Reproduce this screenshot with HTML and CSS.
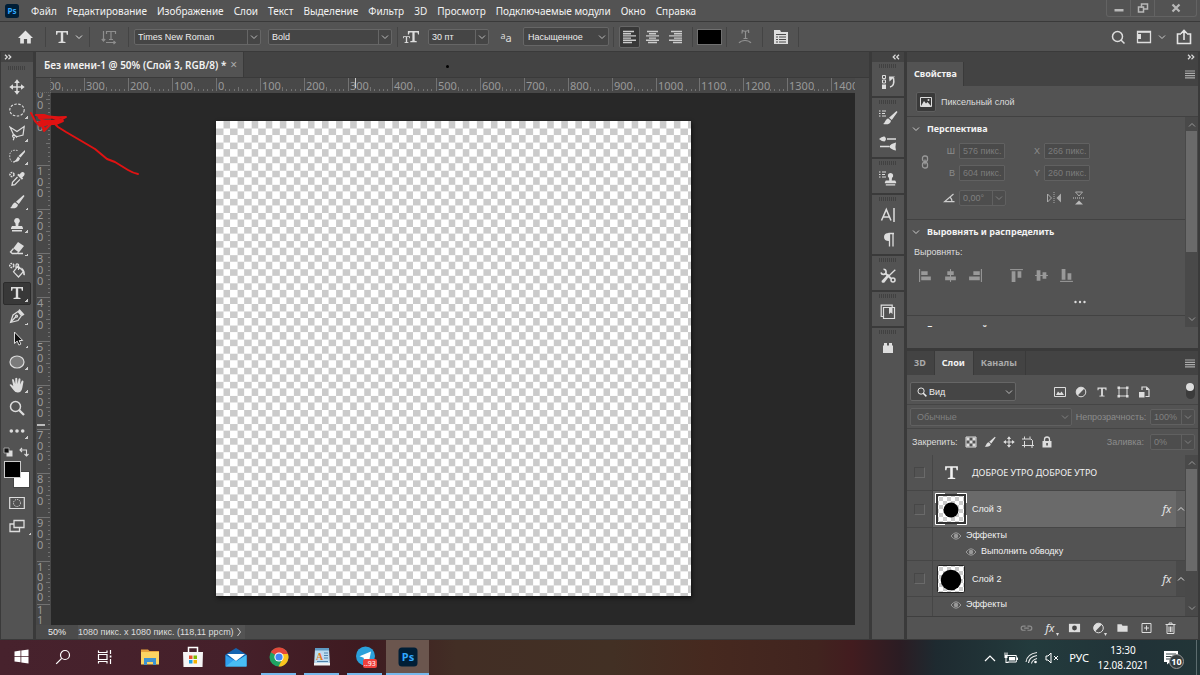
FILE: index.html
```html
<!DOCTYPE html>
<html lang="ru">
<head>
<meta charset="utf-8">
<title>Без имени-1</title>
<link rel="stylesheet" href="styles.css">
</head>
<body>
<svg class="defs" aria-hidden="true">
  <symbol id="chev" viewBox="0 0 8 8"><path d="M1 2.500 4 5.500 7 2.500" fill="none" stroke="currentColor"/></symbol>
  <symbol id="chev-up" viewBox="0 0 8 8"><path d="M1 5.500 4 2.500 7 5.500" fill="none" stroke="currentColor"/></symbol>
  <symbol id="dbl-right" viewBox="0 0 8 6"><path d="M1 .8 3.300 3 1 5.200M4.500.8 6.800 3 4.500 5.200" fill="none" stroke="currentColor" stroke-width="1.200"/></symbol>
  <symbol id="dbl-left" viewBox="0 0 8 6"><path d="M3.500.8 1.200 3 3.500 5.200M7 .8 4.700 3 7 5.200" fill="none" stroke="currentColor" stroke-width="1.200"/></symbol>
  <symbol id="brush" viewBox="0 0 16 16"><path d="M14.500 1 15.500 2 9.800 10 7 7.700zM6.300 8.400 9 10.700C8.700 14 5 15 1 14 3.500 12.500 3 9 6.300 8.400z" fill="currentColor"/></symbol>
  <symbol id="move" viewBox="0 0 16 16"><path d="M8 2v12M2 8h12" stroke="currentColor" stroke-width="1.500"/><path d="M8 .3 10.800 4H5.200zM8 15.700 10.800 12H5.200zM.3 8 4 5.200v5.600zM15.700 8 12 5.200v5.600z" fill="currentColor"/></symbol>
  <symbol id="tee" viewBox="0 0 16 16"><path d="M2 2h12v3.800h-1.200L12.300 3.600H9.200v9l2.300.5V14h-7v-.9l2.300-.5v-9H3.700L3.200 5.800H2z" fill="currentColor"/></symbol>
  <symbol id="stamp" viewBox="0 0 16 16"><path d="M8 1a2.900 2.900 0 0 1 1.600 5.300L9.300 9H13l1 2v1H2v-1l1-2h3.700l-.3-2.700A2.900 2.900 0 0 1 8 1zM3 13h10v1.500H3z" fill="currentColor"/></symbol>
  <symbol id="eye" viewBox="0 0 12 10"><path d="M1 5Q6-1.500 11 5 6 11.500 1 5z" fill="none" stroke="currentColor"/><circle cx="6" cy="5" r="2.200" fill="currentColor"/></symbol>
  <symbol id="lens" viewBox="0 0 16 16"><circle cx="6.500" cy="6.500" r="5" fill="none" stroke="currentColor" stroke-width="1.500"/><path d="m10 10 5 5" stroke="currentColor" stroke-width="2.300"/></symbol>
  <symbol id="half" viewBox="0 0 12 12"><circle cx="6" cy="6" r="4.800" fill="none" stroke="currentColor"/><path d="M9.400 2.600A4.800 4.800 0 0 0 2.600 9.400z" fill="currentColor"/></symbol>
  <symbol id="lines" viewBox="0 0 10 9"><path d="M0 1h10M0 3.300h10M0 5.600h10M0 7.900h10" stroke="currentColor" stroke-width="1.200"/></symbol>
  <symbol id="list" viewBox="0 0 7 7"><path d="M0 1h1.500M3 1h4M0 3.500h1.500M3 3.500h3M0 6h1.500M3 6h4" stroke="currentColor"/></symbol>
</svg>

<header class="menubar">
  <svg class="ps" viewBox="0 0 14 14"><rect width="14" height="14" rx="2.500" fill="#001e36"/><text x="7" y="10" text-anchor="middle" class="ps-text" font-size="8">Ps</text></svg>
  <nav class="menus">
    <button>Файл</button><button>Редактирование</button><button>Изображение</button><button>Слои</button><button>Текст</button><button>Выделение</button><button>Фильтр</button><button>3D</button><button>Просмотр</button><button>Подключаемые модули</button><button>Окно</button><button>Справка</button>
  </nav>
  <div class="winctl">
    <button aria-label="Свернуть"><svg width="12" height="12" viewBox="0 0 12 12"><path d="M1.500 7h9v2.500h-9z" fill="#b8b8b8"/></svg></button>
    <button aria-label="Восстановить"><svg width="12" height="12" viewBox="0 0 12 12"><path d="M4.500 6V2h6v5h-4M1.500 5h5v5h-5z" fill="none" stroke="#b8b8b8" stroke-width="1.500"/></svg></button>
    <button aria-label="Закрыть" class="wide"><svg width="12" height="12" viewBox="0 0 12 12"><path d="m2.500 2.500 7 7m0-7-7 7" stroke="#b8b8b8" stroke-width="2.200"/></svg></button>
  </div>
</header>

<section class="options">
  <button class="w-home" aria-label="Домой"><svg width="17" height="16" viewBox="0 0 16 16"><path d="M8 1.500 15.500 9H13.300v5.500H9.600V10H6.400v4.500H2.700V9H.5z" fill="#e4e4e4"/></svg></button>
  <i class="sep"></i>
  <button class="w-tee" aria-label="Текст"><svg width="16" height="16"><use href="#tee"/></svg><svg width="8" height="8"><use href="#chev"/></svg></button>
  <i class="sep"></i>
  <button class="w-orient" aria-label="Ориентация"><svg width="16" height="16" viewBox="0 0 16 16" fill="none" stroke="#8e8e8e"><path d="M2.500 2v10M.8 10l1.700 2 1.700-2M5.500 5V2.500h9V5M10 2.500v8M8 10.500h4M5 13.500h9M12.500 12l1.800 1.500-1.800 1.500" stroke-width="1.200"/></svg></button>
  <i class="sep"></i>
  <label class="combo split w-font"><select aria-label="Шрифт"><option>Times New Roman</option></select><svg><use href="#chev"/></svg></label>
  <label class="combo split w-style"><select aria-label="Начертание"><option>Bold</option></select><svg><use href="#chev"/></svg></label>
  <i class="sep size-sep"></i>
  <svg class="lab" viewBox="0 0 16 14"><use href="#tee" x="-1" y="5" width="9" height="9"/><use href="#tee" x="3" y="-1" width="15" height="15"/></svg>
  <label class="combo split w-size"><select aria-label="Размер"><option>30 пт</option></select><svg><use href="#chev"/></svg></label>
  <span class="aa"><span>a</span>a</span>
  <label class="combo w-anti"><select aria-label="Сглаживание"><option>Насыщенное</option></select><svg><use href="#chev"/></svg></label>
  <i class="sep"></i>
  <div class="aligns">
    <button class="on" aria-label="Влево"><svg width="13" height="14" viewBox="0 0 13 14"><path d="M0 1.500h11M0 3.700h8M0 5.900h13M0 8.100h8M0 10.300h13M0 12.500h9" stroke="#ccc" stroke-width="1.400"/></svg></button>
    <button aria-label="По центру"><svg width="13" height="14" viewBox="0 0 13 14"><path d="M1 1.500h11M3 3.700h7M0 5.900h13M3 8.100h7M0 10.300h13M2 12.500h9" stroke="#ccc" stroke-width="1.400"/></svg></button>
    <button aria-label="Вправо"><svg width="13" height="14" viewBox="0 0 13 14"><path d="M2 1.500h11M5 3.700h8M0 5.900h13M5 8.100h8M0 10.300h13M4 12.500h9" stroke="#ccc" stroke-width="1.400"/></svg></button>
  </div>
  <i class="sep"></i>
  <button class="colour" aria-label="Цвет текста"></button>
  <i class="sep"></i>
  <button class="w-warp" aria-label="Деформация"><svg width="14" height="15" viewBox="0 0 14 15" fill="none" stroke="#929292" stroke-width="1.200"><path d="M4 4.500 4.300 1.500Q7 3 10.500 1.500l.2 2.500M7.500 2.500v7M5.500 9.500h4M1 14q2-2.500 6-2.500t6 2.500"/></svg></button>
  <i class="sep"></i>
  <button class="w-warp" aria-label="Панели"><svg width="16" height="16" viewBox="0 0 16 16"><path d="M1 1h6l1 2h7v12H1z" fill="#ddd"/><path d="M3 5.500h10M3 8h2M6 8h7M3 10.500h2M6 10.500h7M3 13h2M6 13h7" stroke="#4a4a4a"/></svg></button>
  <i class="sep"></i>
  <div class="opt-right">
    <button aria-label="Поиск"><svg width="16" height="16" viewBox="0 0 16 16" fill="none" stroke="#ddd" stroke-width="1.500"><circle cx="7.500" cy="7.500" r="5"/><path d="m11 11 3.500 3.500"/></svg></button>
    <button aria-label="Рабочая среда"><svg width="16" height="14" viewBox="0 0 16 14"><path d="M1.500 1.500h13v11h-13z" fill="none" stroke="#ddd" stroke-width="1.300"/><path d="M1 1h14v1.800H1zM2 4h3v5H2z" fill="#ddd"/></svg><svg class="ws-chev" width="8" height="8"><use href="#chev"/></svg></button>
    <button aria-label="Поделиться"><svg width="16" height="16" viewBox="0 0 16 16" fill="none" stroke="#e4e4e4" stroke-width="1.600"><path d="M5 5H1.500v9.500h13V5H11M8 11V2M5 4.500l3-3 3 3"/></svg></button>
  </div>
</section>

<main class="work">
  <aside class="tools">
    <div class="strip"><svg width="8" height="6"><use href="#dbl-right"/></svg></div>
    <div class="grip"></div>
    <div class="toolset">
      <button aria-label="Перемещение"><svg><use href="#move"/></svg></button>
      <button class="more" aria-label="Овальная область"><svg viewBox="0 0 16 16"><ellipse cx="8" cy="8" rx="7.200" ry="6" fill="none" stroke="currentColor" stroke-width="1.100" stroke-dasharray="2.500 1.500"/></svg></button>
      <button class="more" aria-label="Лассо"><svg viewBox="0 0 16 16" fill="none" stroke="currentColor" stroke-width="1.200"><path d="M5 10.500 1 2 8 6.500 15.200 1.500 14 10 8.500 11.500 4.500 10.500M5 9.500a1.500 1.500 0 1 0 .2 3l-1 2.700M5 9.500l3 3"/></svg></button>
      <button class="more" aria-label="Быстрое выделение"><svg viewBox="0 0 16 16"><path d="M8.500 2.500Q.7 1 .7 8t6 6" fill="none" stroke="currentColor" stroke-dasharray="1.500 1.200"/><path d="M16 2v2L11.500 9.500 9.500 8zM9 8.500l2 1.700Q10 14.500 4 14 7.500 12 9 8.500z" fill="currentColor"/></svg></button>
      <button aria-label="Пипетка"><svg viewBox="0 0 16 16"><path d="M15.200 1.800q-1.600-1.700-3.200 0L10.500 3.500l-1-.8-1.300 1.300 4.700 4.700L14.200 7.400l-1-1 1.800-1.700q1.100-1.600.2-2.900z" fill="currentColor"/><path d="m8.500 6-5 5.200-.5 3 2.800-.6 5.200-5.200" fill="none" stroke="currentColor" stroke-width="1.300"/><circle cx="3" cy="3.500" r="2" fill="none" stroke="currentColor" stroke-width="1.600" stroke-dasharray="1.600 .8"/></svg></button>
      <button class="more" aria-label="Кисть"><svg><use href="#brush"/></svg></button>
      <button class="more" aria-label="Штамп"><svg><use href="#stamp"/></svg></button>
      <button class="more" aria-label="Ластик"><svg viewBox="0 0 16 16"><path d="M9 2 15 6 9.800 12.500 4.300 8.300z" fill="currentColor"/><path d="M4.500 8.500 1.500 12l1.800 1.500h5l1.200-1.200M9 13.500h5" fill="none" stroke="currentColor" stroke-width="1.300"/></svg></button>
      <button aria-label="Заливка"><svg viewBox="0 0 16 16"><path d="m9 4 5.500 5.500-5 5.500L4.500 9.800zM9.500 8V2.500Q7.500 1 7 3v4" fill="none" stroke="currentColor" stroke-width="1.200"/><path d="M12 5.500q4 1.500 4 7.500-2 1-2-2.500z" fill="currentColor"/><circle cx="2.800" cy="3.500" r="2" fill="none" stroke="currentColor" stroke-width="1.600" stroke-dasharray="1.600 .8"/></svg></button>
      <button class="more active" aria-label="Текст"><svg><use href="#tee"/></svg></button>
      <button class="more" aria-label="Перо"><svg viewBox="0 0 16 16" fill="none" stroke="currentColor" stroke-width="1.200"><path d="M1.500 14.500 4 7l5-3.500 3.500 4L9 12.500zM1.500 14.500l5.500-6"/><circle cx="7.500" cy="8.200" r="1"/><path d="m10.500 1 5 5.500-2 1.500-4.700-4.700z" fill="currentColor" stroke="none"/></svg></button>
      <button class="more" aria-label="Выделение контура"><svg viewBox="0 0 16 16"><path d="M5.500 1v11.500l2.700-2.400 1.700 4 2-1-1.700-3.600h3.500z" fill="#111" stroke="#ddd"/></svg></button>
      <button class="more" aria-label="Эллипс"><svg viewBox="0 0 16 16"><ellipse cx="8" cy="8" rx="7" ry="6" fill="#7b7b7b" stroke="currentColor" stroke-width="1.200"/></svg></button>
      <button class="more" aria-label="Рука"><svg viewBox="0 0 16 16"><path d="M4.500 13 .6 8Q1 6.500 2.800 7.800l1.500 1.500L3 2.800q1-1.400 1.900.1L6.200 7 6.300 1.300q1-1.300 1.900 0L8.600 7l1-5.300q1.100-1.200 1.900.3L11.200 7.500l1.600-3.700q1.300-.7 1.700.8L13.300 11q-1 4.500-4.500 4.500-2.600 0-4.300-2.500z" fill="currentColor"/></svg></button>
      <button aria-label="Масштаб"><svg><use href="#lens"/></svg></button>
      <button class="more" aria-label="Ещё"><svg viewBox="0 0 16 16" fill="currentColor"><circle cx="2.300" cy="8" r="1.800"/><circle cx="8" cy="8" r="1.800"/><circle cx="13.700" cy="8" r="1.800"/></svg></button>
    </div>
    <div class="mini">
      <svg width="10" height="10" viewBox="0 0 10 10"><path d="M3.500 3.500h6v6h-6z" fill="#ddd"/><path d="M1 1h5v5H1z" fill="#111" stroke="#bbb" stroke-width=".8"/></svg>
      <svg width="10" height="10" viewBox="0 0 10 10" fill="none" stroke="#ddd" stroke-width="1.100"><path d="M1 3h6.500v6M3 1 1 3l2 2M5.500 7l2 2 2-2"/></svg>
    </div>
    <div class="swatches"><i></i><i></i></div>
    <div class="modes">
      <button aria-label="Быстрая маска"><svg viewBox="0 0 16 16"><path d="M.7 2.500h14.600v11H.7z" fill="none" stroke="currentColor" stroke-width="1.200"/><circle cx="8" cy="8" r="3.500" fill="none" stroke="currentColor" stroke-dasharray="1.300 1"/></svg></button>
      <button class="more" aria-label="Режим экрана"><svg viewBox="0 0 16 16" fill="none" stroke="currentColor" stroke-width="1.300"><path d="M5 2.500h10v7H5zM5 6H1v7.500h9.500v-4"/></svg></button>
    </div>
  </aside>

  <section class="doc">
    <div class="doctabs"><div class="doctab"><span>Без имени-1 @ 50% (Слой 3, RGB/8) *</span><button aria-label="Закрыть вкладку">×</button></div><i class="speck"></i></div>
    <div class="view">
      <i class="corner"></i>
      <svg class="ruler" id="rh"></svg>
      <i class="vs"></i>
      <svg class="ruler" id="rv"></svg>
      <div class="canvas">
        <svg class="art" viewBox="0 0 1080 1080" shape-rendering="crispEdges"><defs><pattern id="ck" width="32" height="32" patternUnits="userSpaceOnUse"><path d="M0 0h32v32H0z" fill="#fff"/><path d="M16 0h16v16H16zM0 16h16v16H0z" fill="#cbcbcb"/></pattern></defs><rect width="1080" height="1080" fill="url(#ck)"/></svg>
      </div>
      <i class="vs"></i>
    </div>
    <footer class="status"><span class="zoomv">50%</span><span class="info"><span class="clip">1080 пикс. x 1080 пикс. (118,11 ppcm)</span><svg width="6" height="10" viewBox="0 0 6 10"><path d="M1.500 1 4.500 5l-3 4" fill="none" stroke="#ccc"/></svg></span></footer>
    <svg class="scribble" viewBox="0 0 120 75" fill="none" stroke="#e01212" stroke-linecap="round" stroke-linejoin="round"><path stroke-width="2" d="M108 64Q103 63 98 60L85 52 77 49 65 39 48 29 36 22 28 17 24 13"/><path stroke-width="2" d="M1 3 5 11 10 16M6 5 33 8 8 6 12 11 32 10 9 12 24 14 36 7 9 8 18 14 30 12 10 14 15 19 24 12 12 16 14 21 18 17M6 5 14 5 33 11 26 14 12 10"/></svg>
  </section>

  <aside class="dock">
    <div class="strip"><svg width="8" height="6"><use href="#dbl-left"/></svg></div>
    <div class="group"><button aria-label="История"><svg viewBox="0 0 16 16"><path d="M2.500 1.500h3v3h-3zM2.500 6h3v3h-3z" fill="none" stroke="currentColor"/><path d="M2 10.500h4V15H2z" fill="currentColor"/><path d="M10 13q5-1 3.500-9" fill="none" stroke="currentColor" stroke-width="1.500"/><path d="M9 2.500h6L9.500 7.500z" fill="currentColor"/></svg></button></div>
    <div class="group"><button aria-label="Наборы кистей"><svg viewBox="0 0 20 16"><use href="#list" x="1" y="0" width="7" height="7"/><use href="#brush" x="4" y="0" width="16" height="16"/></svg></button><button aria-label="Параметры кисти"><svg viewBox="0 0 18 16"><path d="M8 4h9M1 11.500h9" stroke="currentColor" stroke-width="1.500"/><path d="M0 4q3-3 5.500-2.500 3 2.500 0 5Q3 6.500 0 4zM10 11.500q2-3 7-4-1 4 0 8-5-1-7-4z" fill="currentColor"/></svg></button></div>
    <div class="group"><button aria-label="Источник клонов"><svg viewBox="0 0 20 16"><use href="#list" x="1" y="0" width="7" height="7"/><use href="#stamp" x="5" y="1" width="15" height="15"/></svg></button></div>
    <div class="group"><button aria-label="Символ"><svg viewBox="0 0 16 16" fill="none" stroke="currentColor" stroke-width="1.500"><path d="M1.500 13.500 6.300 2.500l4.700 11M3 10h6.500M14 1v14"/></svg></button><button aria-label="Абзац"><svg viewBox="0 0 16 16"><path d="M8.500 1.500H14M9.500 2v12.500M13 2v12.500" stroke="currentColor" stroke-width="1.300"/><path d="M10 1v8Q4 9.500 4 5t6-4z" fill="currentColor"/></svg></button></div>
    <div class="group"><button aria-label="Инструменты"><svg viewBox="0 0 16 16"><path d="M3.500 1.200A2.600 2.600 0 1 1 1 4.500" fill="none" stroke="currentColor" stroke-width="1.600"/><path d="m5 5 6 5.500" stroke="currentColor" stroke-width="2"/><path d="m15.300 1.700-6.300 6" stroke="currentColor" stroke-width="1.300"/><path d="M9.800 7.500 4.500 14.500q-3 1.200-3-1.500L8 6z" fill="currentColor"/><circle cx="13" cy="12" r="2" fill="none" stroke="currentColor" stroke-width="1.500"/></svg></button></div>
    <div class="group"><button aria-label="Библиотеки"><svg viewBox="0 0 16 16" fill="none" stroke="currentColor" stroke-width="1.200"><path d="M3.500 3.500h11v11h-11z"/><path d="M3 12.500H1.200V1.200h11V3"/><path d="M9 4h3.500v6l-1.700-1.500L9 10z" fill="currentColor" stroke="none"/></svg></button></div>
    <div class="group last"><button aria-label="Модули"><svg viewBox="0 0 16 16"><path d="M3 5.500h1V3h3v2.500h2V3h3v2.500h1V13H3z" fill="currentColor"/></svg></button></div>
  </aside>

  <aside class="panels">
    <div class="strip right"><svg width="8" height="6"><use href="#dbl-right"/></svg></div>
    <section class="panel props">
      <div class="tabs"><button class="tab on">Свойства</button><svg class="burger"><use href="#lines"/></svg></div>
      <div class="kind"><span class="kindicon"><svg width="12" height="10" viewBox="0 0 12 10"><path d="M.5.5h11v9H.5z" fill="none" stroke="#ddd"/><path d="M1 9 4 4l2 2.500L7.500 5 11 9z" fill="#ddd"/><circle cx="8.500" cy="3" r="1" fill="#ddd"/></svg></span>Пиксельный слой</div>
      <div class="scrollbox">
        <div class="inner">
          <section class="sec persp">
            <h2><svg width="8" height="8"><use href="#chev"/></svg>Перспектива</h2>
            <div class="fields">
              <svg class="chain" width="8" height="14" viewBox="0 0 8 14" fill="none" stroke="#999" stroke-width="1.300"><rect x="1.500" y="1" width="5" height="5.500" rx="2"/><rect x="1.500" y="7.500" width="5" height="5.500" rx="2"/><path d="M4 4.500v5"/></svg>
              <label for="fw">Ш</label><input id="fw" value="576 пикс." disabled>
              <label for="fx">X</label><input id="fx" value="266 пикс." disabled>
              <label for="fh">В</label><input id="fh" value="604 пикс." disabled>
              <label for="fy">Y</label><input id="fy" value="260 пикс." disabled>
            </div>
            <div class="angle">
              <svg width="12" height="10" viewBox="0 0 12 10" fill="none" stroke="#ccc" stroke-width="1.200"><path d="M10.500 1 1.500 8.700h10M7 4q2 2 2 4.500"/></svg>
              <label class="combo split dis"><select disabled aria-label="Угол"><option>0,00°</option></select><svg><use href="#chev"/></svg></label>
              <button aria-label="Отразить по горизонтали"><svg width="16" height="12" viewBox="0 0 16 12"><path d="M8 0v12" stroke="#aaa" stroke-dasharray="1 1"/><path d="M1.500 2v8l4-4z" fill="none" stroke="#aaa"/><path d="M15 1.500v9L10.500 6z" fill="#aaa"/></svg></button>
              <button aria-label="Отразить по вертикали"><svg width="14" height="14" viewBox="0 0 14 14"><path d="M1 7h12" stroke="#ccc" stroke-dasharray="1 1"/><path d="M3.500 1h7L7 5z" fill="none" stroke="#aaa"/><path d="M3 13.500h8L7 9.500z" fill="#bbb"/></svg></button>
            </div>
          </section>
          <section class="sec align">
            <h2><svg width="8" height="8"><use href="#chev"/></svg>Выровнять и распределить</h2>
            <p>Выровнять:</p>
            <div class="alignrow">
              <button aria-label="Левые края"><svg viewBox="0 0 14 14"><path d="M1.500 1v12" stroke="#999"/><path d="M3 3h6v3.500H3zM3 8h9v3.500H3z" fill="#999"/></svg></button>
              <button aria-label="Центры по горизонтали"><svg viewBox="0 0 14 14"><path d="M7 1v12" stroke="#999"/><path d="M4 3h6v3.500H4zM2 8h10v3.500H2z" fill="#999"/></svg></button>
              <button aria-label="Правые края"><svg viewBox="0 0 14 14"><path d="M12.500 1v12" stroke="#999"/><path d="M5 3h6v3.500H5zM1 8h10v3.500H1z" fill="#999"/></svg></button>
              <button class="gap" aria-label="Верхние края"><svg viewBox="0 0 14 14"><path d="M1 1.500h12" stroke="#999"/><path d="M2.500 3H6v10H2.500zM8 3h3.500v6H8z" fill="#999"/></svg></button>
              <button aria-label="Центры по вертикали"><svg viewBox="0 0 14 14"><path d="M1 7h12" stroke="#999"/><path d="M2.500 2H6v10H2.500zM8 4h3.500v6H8z" fill="#999"/></svg></button>
              <button aria-label="Нижние края"><svg viewBox="0 0 14 14"><path d="M1 12.500h12" stroke="#999"/><path d="M2.500 1H6v10H2.500zM8 5h3.500v6H8z" fill="#999"/></svg></button>
            </div>
            <div class="dots"><svg width="12" height="4" viewBox="0 0 12 4" fill="#ddd"><circle cx="1.500" cy="2" r="1.200"/><circle cx="6" cy="2" r="1.200"/><circle cx="10.500" cy="2" r="1.200"/></svg></div>
          </section>
          <section class="sec next"><h2><svg width="8" height="8"><use href="#chev"/></svg>Быстрые действия</h2></section>
        </div>
        <div class="sb"><svg><use href="#chev-up"/></svg><i class="thumb t1"></i><svg><use href="#chev"/></svg></div>
      </div>
    </section>

    <section class="panel layers">
      <div class="tabs"><button class="tab">3D</button><button class="tab on">Слои</button><button class="tab">Каналы</button><svg class="burger"><use href="#lines"/></svg></div>
      <div class="lrow filter">
        <label class="combo search"><svg class="mag"><use href="#lens"/></svg><select aria-label="Фильтр слоёв"><option>Вид</option></select><svg><use href="#chev"/></svg></label>
        <div class="ficons">
          <svg viewBox="0 0 12 12"><path d="M.5 1.500h11v9H.5z" fill="none" stroke="#ddd"/><path d="M2 9l2-3.500 2 2 1.500-2L10 9z" fill="#ddd"/></svg>
          <svg viewBox="0 0 12 12"><use href="#half"/></svg>
          <svg><use href="#tee"/></svg>
          <svg viewBox="0 0 12 12"><path d="M2 2h8v8H2z" fill="none" stroke="#ddd"/><path d="M.5.5h2.500V3H.5zM9 .5h2.500V3H9zM.5 9h2.500v2.500H.5zM9 9h2.500v2.500H9z" fill="#ddd"/></svg>
          <svg viewBox="0 0 12 12"><path d="M4 4V1h4.500L11 3.500v7H7.500" fill="none" stroke="#ddd" stroke-width="1.200"/><path d="M1 6h5.500v5.500H1zM8 1v3h3z" fill="#ddd"/></svg>
        </div>
        <span class="toggle"></span>
      </div>
      <div class="lrow blend">
        <label class="combo dis w-blend"><select disabled aria-label="Режим наложения"><option>Обычные</option></select><svg><use href="#chev"/></svg></label>
        <span class="dim">Непрозрачность:</span>
        <label class="combo split dis w-pct"><select disabled aria-label="Непрозрачность"><option>100%</option></select><svg><use href="#chev"/></svg></label>
      </div>
      <div class="lrow locks">
        <span class="lk">Закрепить:</span>
        <svg viewBox="0 0 12 12"><path d="M1 1h10v10H1z" fill="none" stroke="#ddd"/><path d="M1.500 1.500h3v3h-3zM7.500 1.500h3v3h-3zM4.500 4.500h3v3h-3zM1.500 7.500h3v3h-3zM7.500 7.500h3v3h-3z" fill="#ddd"/></svg>
        <svg><use href="#brush"/></svg>
        <svg><use href="#move"/></svg>
        <svg viewBox="0 0 12 12" fill="none" stroke="#ddd"><path d="M2.500.5V3M0 3h9l1.500 1.500V9.500M2.500 5v6.500M0 9.500h12M8 .5v2M10 10v2"/></svg>
        <svg viewBox="0 0 12 12"><path d="M1.500 5h9v6.500h-9z" fill="#ddd"/><path d="M3.500 5V3.500a2.500 2.500 0 0 1 5 0V5" fill="none" stroke="#ddd" stroke-width="1.300"/><path d="M5.300 7h1.500v2.500H5.300z" fill="#444"/></svg>
        <span class="dim fill">Заливка:</span>
        <label class="combo split dis w-pct"><select disabled aria-label="Заливка"><option>0%</option></select><svg><use href="#chev"/></svg></label>
      </div>
      <div class="listbox">
        <div class="list">
          <div class="layer"><span class="vis"><input type="checkbox" aria-label="Видимость текстового слоя"></span><div class="body caps"><span class="thumbbox"><svg width="17" height="17"><use href="#tee"/></svg></span>ДОБРОЕ УТРО ДОБРОЕ УТРО</div></div>
          <div class="layer sel"><span class="vis"><input type="checkbox" aria-label="Видимость слоя 3"></span><div class="body"><span class="thumbbox"><svg class="th" width="32" height="32" viewBox="0 0 32 32"><path d="M1 1h30v30H1z" fill="#333"/><path d="M.5 10V.5H10M22 .5h9.500V10M.5 22v9.500H10M22 31.500h9.500V22" fill="none" stroke="#fff"/><rect x="3" y="3" width="26" height="26" fill="url(#mini)"/><circle cx="16" cy="17" r="7.500"/></svg></span>Слой 3</div><span class="fx">fx</span><span class="exp"><svg><use href="#chev-up"/></svg></span></div>
          <div class="effect e1"><span class="vis"></span><svg><use href="#eye"/></svg>Эффекты</div>
          <div class="effect e2"><span class="vis"></span><svg><use href="#eye"/></svg>Выполнить обводку</div>
          <div class="layer"><span class="vis"><input type="checkbox" aria-label="Видимость слоя 2"></span><div class="body"><span class="thumbbox"><svg class="th" width="32" height="32" viewBox="0 0 32 32"><defs><pattern id="mini" width="8" height="8" patternUnits="userSpaceOnUse"><path d="M0 0h8v8H0z" fill="#fff"/><path d="M0 0h4v4H0zM4 4h4v4H4z" fill="#ccc"/></pattern></defs><rect x="2.500" y="2.500" width="27" height="27" rx="1" fill="url(#mini)" stroke="#222"/><circle cx="16" cy="17" r="10.300"/></svg></span>Слой 2</div><span class="fx">fx</span><span class="exp"><svg><use href="#chev-up"/></svg></span></div>
          <div class="effect e1"><span class="vis"></span><svg><use href="#eye"/></svg>Эффекты</div>
          <div class="effect e2"><span class="vis"></span><svg><use href="#eye"/></svg>Выполнить обводку</div>
        </div>
        <div class="sb"><svg><use href="#chev-up"/></svg><i class="thumb t2"></i><svg><use href="#chev"/></svg></div>
      </div>
      <div class="lfoot">
        <button aria-label="Связать"><svg viewBox="0 0 14 12" fill="none" stroke="#8d8d8d" stroke-width="1.300"><path d="M6 4H3.500a2.200 2.200 0 0 0 0 4.400H6M8 4h2.500a2.200 2.200 0 0 1 0 4.400H8M4.500 6.200h5"/></svg></button>
        <button class="fx dd" aria-label="Стиль">fx</button>
        <button aria-label="Маска"><svg viewBox="0 0 14 12"><path d="M1 1.500h12v9H1z" fill="#ddd"/><circle cx="7" cy="6" r="2.600" fill="#444"/></svg></button>
        <button class="dd" aria-label="Корректирующий слой"><svg viewBox="0 0 12 12"><use href="#half"/></svg></button>
        <button aria-label="Группа"><svg viewBox="0 0 14 12"><path d="M1.500 2H6l1 1.500h5.500V10h-11z" fill="#ddd"/></svg></button>
        <button aria-label="Новый слой"><svg viewBox="0 0 12 12" fill="none" stroke="#ddd"><path d="M1.500 1.500h9v9h-9zM6 3.500v5M3.500 6h5"/></svg></button>
        <button aria-label="Удалить"><svg viewBox="0 0 12 12" fill="none" stroke="#ddd"><path d="M1 2.500h10M4.500 2.500v-1.500h3v1.500M2.500 3v8.500h7V3M4.500 4.500v5.500M6 4.500v5.500M7.500 4.500v5.500"/></svg></button>
      </div>
    </section>
  </aside>
</main>

<footer class="taskbar">
  <div class="apps">
    <button class="sys" aria-label="Пуск"><svg width="15" height="15" viewBox="0 0 15 15" fill="#fff"><path d="M.5 2.500 6.500 1.600V7H.5zM7.300 1.500 14.500.5V7H7.300zM.5 7.800h6v5.500l-6-.9zM7.300 7.800h7.200v6.700l-7.200-1z"/></svg></button>
    <button class="sys" aria-label="Поиск"><svg width="16" height="16" viewBox="0 0 16 16" fill="none" stroke="#fff" stroke-width="1.200"><circle cx="10" cy="6" r="4.500"/><path d="m6.700 9.300-5.500 5.500"/></svg></button>
    <button class="sys" aria-label="Представление задач"><svg width="16" height="14" viewBox="0 0 16 14" fill="none" stroke="#fff" stroke-width="1.200"><path d="M1.500 4.500h8.500v5H1.500zM1.500.500v2h8.500v-2M1.500 13.500v-2h8.500v2M13.500 0v4M13.500 9v5"/><path d="M12.700 5.500h1.700v2h-1.700z" fill="#fff" stroke="none"/></svg></button>
    <button class="first" aria-label="Проводник"><svg width="20" height="18" viewBox="0 0 20 18"><path d="M1 1.500h7l1.500 1.500H19v13H1z" fill="#e8a33d"/><path d="M1 4h18v12.500H1z" fill="#fcd462"/><path d="M4 10h12v7h-3v-3H7v3H4z" fill="#3f93d0"/></svg></button>
    <button aria-label="Магазин"><svg width="22" height="22" viewBox="0 0 22 22"><path d="M6.500 6V1.500h9V6" fill="none" stroke="#fff" stroke-width="1.500"/><path d="M1 6h20l-.5 15h-19z" fill="#f5f5f5"/><path d="M7 9.500h3.500V13H7z" fill="#e8502f"/><path d="M11.500 9.500H15V13h-3.500z" fill="#7fba00"/><path d="M7 14h3.500v3.500H7z" fill="#1ba1e2"/><path d="M11.500 14H15v3.500h-3.500z" fill="#f5b400"/></svg></button>
    <button aria-label="Почта"><svg width="22" height="20" viewBox="0 0 22 20"><path d="M.5 7.500 11 1l10.500 6.500V19H.5z" fill="#1564b0"/><path d="M2 7h18l-9 7z" fill="#fff"/><path d="M.5 8 11 14.500 21.500 8v11.500H.5z" fill="#2e9ff0"/><path d="M.5 19.500 9 13l2 1.500L21.500 8v11.500z" fill="#48bdf5"/></svg></button>
    <button class="run" aria-label="Chrome"><svg width="20" height="20" viewBox="0 0 20 20"><circle cx="10" cy="10" r="9.500" fill="#1fa463"/><path d="M10 10 1.800 5.200A9.500 9.500 0 0 1 18.800 6.500L19 7H10z" fill="#e5473a"/><path d="M19 7a9.500 9.500 0 0 1-9.500 12.500L14 11 10 7z" fill="#fcc31e"/><circle cx="10" cy="10" r="4.600" fill="#fff"/><circle cx="10" cy="10" r="3.600" fill="#4285f4"/></svg></button>
    <button class="run" aria-label="WordPad"><svg width="18" height="20" viewBox="0 0 18 20"><path d="M2 2h14l1 16H1z" fill="#bcdcf0"/><path d="M2 1h14v2.500H2z" fill="#5f9ac4"/><path d="M1 16h16v2.500H1z" fill="#f2f2f2"/><text x="3" y="13" font-size="10" font-weight="700" fill="#e87a1d" font-family="Liberation Serif, serif">A</text><path d="M11 6h4M11 8.500h4M11 11h4M4 14.500h11" stroke="#4f83ac"/></svg></button>
    <button class="run" aria-label="Telegram"><svg width="24" height="22" viewBox="0 0 24 22"><circle cx="12.500" cy="10" r="9.500" fill="#2ba0da"/><path d="m6.500 10.200 11.500-4.700-2 10-3.300-2.400-1.700 1.700-.3-3z" fill="#fff"/><rect x="10" y="13" width="14" height="9" rx="2" fill="#f0403c"/><text x="17" y="20" font-size="7" fill="#fff" text-anchor="middle">..93</text></svg></button>
    <button class="run cur" aria-label="Photoshop"><svg width="20" height="20" viewBox="0 0 20 20"><rect x=".5" y=".5" width="19" height="19" rx="3.500" fill="#001e36"/><text x="10" y="14" text-anchor="middle" class="ps-text" font-size="11">Ps</text></svg></button>
  </div>
  <div class="tray">
    <svg width="12" height="8" viewBox="0 0 12 8"><path d="m1 7 5-5 5 5" fill="none" stroke="#fff" stroke-width="1.200"/></svg>
    <svg width="15" height="12" viewBox="0 0 15 12"><path d="M3.500 3.500h9.800v6.500H4.500" fill="none" stroke="#fff"/><path d="M6 5h6v3.500H6zM13.500 5.500H15v2.500h-1.500zM1.500 3h3v3h-3zM1.500.500h1V3h-1zM3.500.500h1V3h-1zM2.500 6h1v4h2v1h-3z" fill="#fff"/></svg>
    <svg width="13" height="13" viewBox="0 0 13 13" fill="none" stroke="#eee" stroke-width="1.100"><path d="M1 11Q2 3 12 1.500M3.500 12Q4 6 12 4.500M6.500 12.500Q7 9 12 7.500"/><circle cx="10.500" cy="11" r="1.300" fill="#fff" stroke="none"/></svg>
    <svg width="14" height="12" viewBox="0 0 14 12" fill="none" stroke="#fff"><path d="M1 4h2l3-3v10L3 8H1zM9 4l4 4M13 4 9 8"/></svg>
    <span class="lang">РУС</span>
    <span class="clock">13:30<br>12.08.2021</span>
    <span class="note"><svg width="16" height="15" viewBox="0 0 16 15"><path d="M1 1h14v11H7l-3 2.500V12H1z" fill="#fff"/><path d="M3 4h10M3 6.500h10M3 9h6" stroke="#38484b"/></svg><b>10</b></span>
    <i class="peek"></i>
  </div>
</footer>
<script src="script.js"></script>
</body>
</html>
```

FILE: styles.css
```css
:root {
  --bg: #535353;
  --dark: #434343;
  --line: #3a3a3a;
  --field: #454545;
  --edge: #666;
  --text: #ddd;
  --ui: "Noto Sans", "Open Sans", sans-serif;
}
* { box-sizing: border-box; }
body {
  margin: 0;
  height: 100vh;
  display: flex;
  flex-direction: column;
  overflow: hidden;
  background: var(--line);
  color: var(--text);
  font: 9px/12px "Liberation Sans", Arial, sans-serif;
}
button, select, input { font: inherit; color: inherit; margin: 0; }
button { border: 0; padding: 0; background: none; display: flex; align-items: center; justify-content: center; }
svg { display: block; flex: none; }
.defs { position: absolute; width: 0; height: 0; }
.ps-text { font-family: var(--ui); font-weight: 700; fill: #31a8ff; }

/* menu bar */
.menubar { height: 21px; flex: none; display: flex; align-items: center; background: var(--bg); padding-left: 5px; margin-bottom: 1px; }
.ps { width: 14px; height: 14px; }
.menus { display: flex; flex: 1; padding-left: 7px; font: 10px/16px var(--ui); color: #f2f2f2; }
.menus button { padding: 0 5px; }
.winctl { display: flex; align-self: flex-start; height: 17px; margin-right: 3px; border: 1px solid #636363; border-top: 0; border-radius: 0 0 3px 3px; }
.winctl button { width: 24px; border-right: 1px solid #636363; }
.winctl .wide { width: 41px; border: 0; }

/* options bar */
.options { height: 29px; flex: none; display: flex; align-items: center; background: var(--bg); padding-left: 5px; margin-bottom: 1px; }
.sep { width: 1px; height: 20px; background: #444; flex: none; }
.w-home { width: 40px; }
.w-tee { width: 43px; gap: 5px; padding-left: 1px; }
.w-orient { width: 38px; }
.combo { display: inline-grid; align-items: center; height: 16px; background: var(--field); border: 1px solid var(--edge); border-radius: 2px; }
.combo > * { grid-area: 1 / 1; }
.combo select { appearance: none; width: 100%; height: 100%; border: 0; background: none; padding: 0 14px 0 3px; outline: 0; opacity: 1; color: #eee; }
.combo > svg:last-child { width: 8px; height: 8px; justify-self: end; margin-right: 2px; pointer-events: none; color: #bbb; }
.split { background: linear-gradient(var(--edge), var(--edge)) right 12px top / 1px 100% no-repeat var(--field); }
.w-font { width: 127px; margin-left: 5px; }
.w-style { width: 124px; margin-left: 7px; }
.size-sep { margin-left: 5px; }
.lab { width: 16px; height: 14px; margin: 0 9px 0 5px; }
.w-size { width: 61px; }
.aa { width: 34px; text-align: center; font: 11px/14px var(--ui); }
.aa span { vertical-align: 3px; font-size: 9px; }
.w-anti { width: 86px; height: 19px; margin-right: 4px; }
.w-anti select { padding-left: 4px; }
.aligns { display: flex; gap: 2px; padding: 0 6px 0 5px; }
.aligns button { width: 21px; height: 22px; border: 1px solid transparent; border-radius: 2px; }
.aligns .on { background: #383838; border-color: #666; }
.colour { width: 25px; height: 16px; margin: 0 4px; background: #000; border: 1px solid #707070; }
.w-warp { width: 35px; }
.opt-right { display: flex; gap: 10px; margin-left: auto; padding-right: 8px; }
.opt-right button { gap: 6px; }
.ws-chev { color: #ccc; }

/* workspace */
.work { flex: 1; min-height: 0; display: flex; }
.strip { height: 10px; flex: none; display: flex; align-items: center; padding-left: 3px; background: var(--dark); margin-bottom: 1px; }
.tools { width: 33px; flex: none; display: flex; flex-direction: column; background: var(--bg); margin: 0 3px 1px 0; border-left: 1px solid var(--line); }
.grip { height: 4px; width: 18px; margin: 3px auto 6px; background: repeating-linear-gradient(90deg, #414141 0 1px, transparent 1px 2px); }
.toolset { height: 366px; display: flex; flex-direction: column; }
.toolset button, .modes button { position: relative; color: #ddd; }
.toolset button { flex: 1; margin: 0 2px; border: 1px solid transparent; border-radius: 2px; }
.toolset svg, .modes svg { width: 16px; height: 16px; }
.toolset .active { background: #383838; border-color: #2c2c2c; }
.more::after { content: ""; position: absolute; right: 2px; bottom: 2px; width: 3px; height: 3px; background: linear-gradient(135deg, transparent 50%, #ccc 50%); }
.mini { display: flex; justify-content: space-between; padding: 5px 4px 0 2px; }
.swatches { display: grid; height: 27px; margin: 4px 3px 0 3px; }
.swatches i { grid-area: 1 / 1; width: 17px; height: 17px; }
.swatches i:first-child { background: #000; border: 1px solid #ccc; z-index: 1; }
.swatches i:last-child { background: #fff; justify-self: end; align-self: end; border: 1px solid #444; }
.modes { padding-top: 3px; }
.modes button { width: 100%; height: 23px; }

.doc { flex: 1; min-width: 0; position: relative; display: flex; flex-direction: column; margin-bottom: 1px; }
.doctabs { height: 25px; flex: none; display: flex; background: var(--dark); margin-bottom: 1px; }
.doctab { display: flex; align-items: center; gap: 4px; padding: 0 6px 0 8px; background: var(--bg); border-right: 1px solid var(--line); font: 600 10px/14px var(--ui); color: #f2f2f2; white-space: nowrap; }
.doctab button { font-size: 12px; font-weight: 400; color: #aaa; }
.speck { width: 3px; height: 3px; border-radius: 50%; background: #000; margin: 13px 0 0 202px; }
.view { flex: 1; min-height: 0; display: grid; grid-template: 15px 1fr / 15px 1fr 14px; }
.ruler { width: 100%; height: 100%; background: #484848; overflow: hidden; font: 11px/11px var(--ui); fill: #999; }
.corner { background: #4b4b4b; border: dotted #666; border-width: 0 1px 1px 0; }
.vs { background: #4b4b4b; }
.canvas { background: #282828; padding: 28px 0 0 165px; min-width: 0; }
.art { width: 475px; height: 475px; box-shadow: 1px 2px 4px #111; }
.status { height: 14px; flex: none; display: flex; align-items: center; background: #4b4b4b; color: #eee; line-height: 14px; }
.zoomv { width: 42px; padding-left: 12px; }
.info { display: flex; align-items: center; gap: 2px; background: #535353; padding-right: 3px; color: #ddd; white-space: nowrap; }
.clip { overflow: hidden; }
.scribble { position: absolute; left: -6px; top: 58px; width: 120px; height: 75px; overflow: visible; pointer-events: none; }

/* icon dock */
.dock { width: 32px; flex: none; display: flex; flex-direction: column; gap: 2px; margin: 0 3px 1px 3px; }
.dock .strip { justify-content: flex-end; padding: 0 4px 0 0; margin: 0 0 -2px; }
.group { background: var(--bg); padding: 7px 0 2px; position: relative; }
.group::before { content: ""; position: absolute; left: 7px; top: 2px; width: 18px; height: 4px; background: repeating-linear-gradient(90deg, #414141 0 1px, transparent 1px 2px); }
.group button { width: 100%; height: 25px; color: #ddd; }
.group svg { height: 16px; width: 20px; }
.group.last { flex: 1; }

/* right panels */
.panels { width: 291px; flex: none; display: flex; flex-direction: column; margin: 0 2px 1px 0; }
.right { justify-content: flex-end; padding-right: 3px; margin: 0; }
.panel { background: var(--bg); }
.tabs { height: 24px; display: flex; background: var(--dark); }
.tab { padding: 0 6px 0 7px; font-family: var(--ui); font-weight: 700; color: #aaa; border-right: 1px solid var(--line); }
.tab.on { background: var(--bg); color: #f2f2f2; }
.burger { width: 10px; height: 9px; margin: 8px 3px 0 auto; color: #aaa; }
.props { height: 286px; flex: none; margin-bottom: 3px; }
.kind { display: flex; align-items: center; gap: 5px; height: 31px; padding: 2px 0 0 9px; border-bottom: 1px solid #414141; }
.kindicon { width: 20px; height: 20px; background: #3a3a3a; border: 1px solid #5f5f5f; border-radius: 2px; display: grid; place-items: center; }
.scrollbox { display: flex; height: 210px; }
.inner { flex: 1; overflow: hidden; }
.sec { border-bottom: 1px solid #424242; }
.sec h2 { margin: 0; display: flex; align-items: center; gap: 7px; padding-left: 5px; font: 700 9px/12px var(--ui); color: #f2f2f2; }
.sec h2 svg { color: #ccc; }
.persp { height: 103px; padding-top: 6px; }
.fields { display: grid; grid-template-columns: 16px 18px 46px 31px 46px; column-gap: 4px; row-gap: 6px; padding: 8px 0 0 10px; align-items: center; color: #8c8c8c; }
.chain { grid-row: 1 / 3; grid-column: 1; justify-self: center; }
.fields label { text-align: right; }
.fields input { width: 46px; height: 16px; padding: 0 2px 0 3px; border: 1px solid #616161; background: #4a4a4a; color: #7c7c7c; border-radius: 1px; }
.angle { display: flex; align-items: center; gap: 4px; padding: 9px 0 0 36px; }
.angle .combo { width: 47px; margin-right: 36px; }
.angle button { margin-right: 6px; }
.dis { --field: #4d4d4d; --edge: #606060; }
.dis select, .dis > svg:last-child { color: #808080; }
.align { height: 96px; padding-top: 6px; }
.align p { margin: 8px 0 0 7px; }
.alignrow { display: flex; gap: 10px; padding: 10px 0 0 11px; }
.alignrow svg { width: 15px; height: 15px; }
.alignrow .gap { margin-left: 16px; }
.dots { padding: 17px 0 0 167px; }
.next { padding-top: 7px; border: 0; }
.sb { width: 13px; flex: none; display: flex; flex-direction: column; align-items: center; background: #494949; padding: 4px 0; gap: 2px; color: #999; }
.sb svg { width: 8px; height: 8px; }
.sb svg:last-child { margin-top: auto; }
.thumb { width: 11px; background: #6a6a6a; }
.t1 { height: 121px; }
.t2 { height: 102px; }

.layers { flex: 1; min-height: 0; display: flex; flex-direction: column; }
.layers .tab { padding: 0 8px 0 7px; }
.lrow { display: flex; align-items: center; flex: none; padding: 0 3px; }
.filter { height: 30px; padding-top: 4px; border-bottom: 1px solid #454545; }
.search { width: 106px; height: 19px; }
.search .mag { width: 10px; height: 10px; margin-left: 6px; color: #eee; }
.search select { padding-left: 18px; }
.ficons { display: flex; gap: 9px; margin-left: 38px; }
.ficons svg { width: 12px; height: 12px; }
.toggle { width: 9px; height: 16px; border-radius: 5px; background: #3b3b3b; margin: 0 0 1px auto; }
.toggle::before { content: ""; display: block; width: 8px; height: 8px; border-radius: 50%; background: #ddd; }
.blend { height: 24px; justify-content: space-between; border-bottom: 1px solid #454545; }
.w-blend { width: 162px; height: 18px; }
.w-blend select { padding-left: 6px; }
.dim { color: #8c8c8c; }
.w-pct { width: 45px; }
.locks { height: 26px; gap: 7px; padding: 0 3px 1px 5px; }
.locks > svg { width: 12px; height: 12px; }
.locks .combo { margin-left: -1px; }
.fill { margin-left: auto; }
.listbox { flex: 1; min-height: 0; display: flex; overflow: hidden; }
.list { flex: 1; overflow: hidden; }
.layer { display: flex; height: 36px; border-bottom: 1px solid #464646; }
.layer.sel { height: 37px; }
.vis { width: 26px; flex: none; display: grid; place-items: center; border-right: 1px solid #464646; background: var(--bg); }
.vis input { appearance: none; width: 11px; height: 11px; border: 1px solid #474747; border-right-color: #6a6a6a; border-bottom-color: #6a6a6a; }
.body { flex: 1; display: flex; align-items: center; gap: 5px; color: #f2f2f2; padding-left: 2px; }
.caps { font-family: var(--ui); }
.sel .body, .sel .fx { background: #6a6a6a; }
.thumbbox { width: 32px; display: grid; place-items: center; }
.fx { font: italic 11px/14px var(--ui); color: #e4e4e4; }
.layer .fx { display: grid; place-items: center; width: 18px; }
.exp { width: 9px; display: grid; place-items: center; background: #4a4a4a; }
.exp svg { width: 8px; height: 8px; }
.sel .exp { background: #5e5e5e; }
.effect { display: flex; height: 14px; align-items: center; color: #f2f2f2; }
.effect .vis { align-self: stretch; }
.effect svg { width: 12px; height: 10px; margin: 2px 4px 0 17px; color: #999; }
.effect.e2 svg { margin-left: 32px; }
.effect.e2 { height: 19px; border-bottom: 1px solid #464646; }
.lfoot { height: 23px; flex: none; display: flex; justify-content: flex-end; align-items: center; gap: 8px; padding-right: 20px; border-top: 1px solid #3f3f3f; }
.lfoot button { width: 16px; height: 16px; position: relative; }
.lfoot svg { width: 13px; height: 12px; }
.dd::after { content: ""; position: absolute; right: -1px; bottom: 0; width: 3px; height: 3px; background: #ddd; clip-path: polygon(0 0, 100% 0, 50% 100%); }

/* taskbar */
.taskbar { height: 35px; flex: none; display: flex; justify-content: space-between; background: linear-gradient(90deg, #47222d 0, #45202a 20%, #3e1a20 30%, #422e25 38%, #423024 51%, #46291f 59%, #41241f 68%, #421c1f 71%, #2b1c23 75%, #1e2a30 78%, #233b3d 86%, #213237 95%, #223537 100%); color: #fff; font-family: var(--ui); }
.apps { display: flex; }
.apps button { width: 43px; border-bottom: 2px solid transparent; }
.apps .sys { width: 42px; }
.apps .first { margin-left: 2px; }
.apps .run { background: linear-gradient(#76b9ed, #76b9ed) center bottom / 35px 2px no-repeat border-box; }
.apps .cur { background: linear-gradient(#76b9ed, #76b9ed) center bottom / 100% 2px no-repeat border-box #6b564e; }
.tray { display: flex; align-items: center; gap: 7px; font-size: 10px; line-height: 15px; }
.lang { margin-left: 3px; font-size: 11px; }
.clock { text-align: center; width: 54px; }
.note { position: relative; width: 32px; padding-left: 6px; }
.note b { position: absolute; left: 12px; top: 4px; width: 15px; height: 15px; border-radius: 50%; border: 1px solid #999; background: #333c3e; font-size: 9px; line-height: 13px; text-align: center; }
.peek { width: 1px; height: 100%; background: #5c6c6e; margin-right: 3px; }
```

FILE: script.js
```js
// Rulers: 100 document pixels span STEP screen pixels at 50% zoom.
const NS = "http://www.w3.org/2000/svg";
const STEP = 43.95;

function add(parent, name, attrs, text) {
  const el = document.createElementNS(NS, name);
  for (const key in attrs) el.setAttribute(key, attrs[key]);
  if (text) el.textContent = text;
  parent.appendChild(el);
}

function buildRuler(svg, origin, vertical, from, to) {
  let path = "";
  for (let n = from * 10; n <= to * 10; n++) {
    const p = Math.round(origin + n * STEP / 10);
    const minor = ((n % 10) + 10) % 10;
    const covered = n >= 100 ? 5 : n === minor ? 1 : 4;
    if (!vertical && minor > 0 && minor <= covered) continue;
    const len = minor === 0 ? 13 : minor === 5 ? 4 : 2;
    path += vertical ? `M${14 - len} ${p + 0.5}h${len}` : `M${p + 0.5} ${13 - len}v${len}`;
  }
  add(svg, "path", { d: path, stroke: "#727272" });
  for (let n = from; n <= to; n++) {
    const p = Math.round(origin + n * STEP);
    const label = String(Math.abs(n * 100));
    if (!vertical) {
      add(svg, "text", { x: p + 2, y: 12 }, label);
    } else {
      const pitch = label.length > 3 ? 10 : 11;
      [...label].forEach((c, i) => add(svg, "text", { x: 1, y: p + 10 + i * pitch }, c));
    }
  }
}

buildRuler(document.getElementById("rh"), 165, false, -4, 14);
buildRuler(document.getElementById("rv"), 28, true, -1, 11);
add(document.getElementById("rh"), "path", { d: "M304.500 0v10", stroke: "#ccc" });
add(document.getElementById("rv"), "path", { d: "M1 332h8", stroke: "#bbb", "stroke-width": 2 });
```
